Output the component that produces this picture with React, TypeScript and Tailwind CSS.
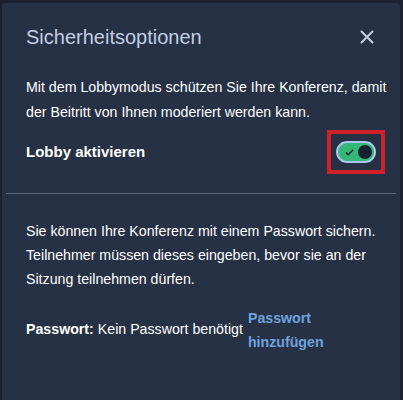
import { useState } from 'react';

const SecurityDialog = () => {
    const [lobby, setLobby] = useState(true);

    return (
        <div className="w-[403px] h-[400px] bg-[#1b2130] pt-[3px] pl-[2px] pr-[3px] font-['Liberation_Sans',Arial,sans-serif]">
            <div className="h-full bg-[#263146] rounded-t-[3px]">
                {/* Header */}
                <div className="flex items-center justify-between pl-[24px] pr-[26px] pt-[14px] h-[54px]">
                    <h1 className="text-[20px] text-[#c3cde2] leading-none">Sicherheitsoptionen</h1>
                    <button aria-label="Schließen" className="text-[#c3cde2]">
                        <svg width="14" height="14" viewBox="0 0 14 14" fill="none" stroke="currentColor" strokeWidth="2" strokeLinecap="round">
                            <path d="M1.5 1.5l11 11M12.5 1.5l-11 11" />
                        </svg>
                    </button>
                </div>

                {/* Lobby */}
                <div className="px-[24px]">
                    <p className="text-[14.2px] leading-[25px] text-white pt-[18px] whitespace-nowrap">
                        Mit dem Lobbymodus schützen Sie Ihre Konferenz, damit
                        <br />
                        der Beitritt von Ihnen moderiert werden kann.
                    </p>
                    <div className="flex items-center justify-between h-[44px] mt-[5px]">
                        <span className="text-[15px] font-bold text-white">Lobby aktivieren</span>
                        <div className="relative">
                            <div className="absolute -inset-x-[9px] -inset-y-[11px] border-4 border-[#d0202a]" />
                            <button
                                onClick={() => setLobby(!lobby)}
                                aria-pressed={lobby}
                                className={`relative flex items-center w-[40px] h-[22px] rounded-full border-2 border-[#a9c6ee] ${lobby ? 'bg-[#35b877] justify-end' : 'bg-[#4a5568] justify-start'} px-[2px]`}
                            >
                                {lobby && (
                                    <svg className="absolute left-[7px] top-[6px]" width="9" height="7" viewBox="0 0 9 7" fill="none" stroke="#1b2433" strokeWidth="1.4">
                                        <path d="M0.8 3.5l2.3 2.3L8.2 0.8" />
                                    </svg>
                                )}
                                <span className="w-[14px] h-[14px] rounded-full bg-[#17202e]" />
                            </button>
                        </div>
                    </div>
                </div>

                <div className="mx-[4px] mt-[19px] h-px bg-[#5d6880]" />

                {/* Passwort */}
                <div className="px-[24px] pt-[25px]">
                    <p className="text-[14.2px] leading-[24px] text-white">
                        Sie können Ihre Konferenz mit einem Passwort sichern. Teilnehmer müssen dieses eingeben, bevor sie an der Sitzung teilnehmen dürfen.
                    </p>
                    <div className="flex items-center mt-[15px] text-[14.2px] text-white">
                        <span className="font-bold mr-[4px]">Passwort:</span>
                        <span>Kein Passwort benötigt</span>
                        <a href="#" className="ml-[5px] font-bold text-[#6ea3dd] leading-[24px] w-[90px]">
                            Passwort hinzufügen
                        </a>
                    </div>
                </div>
            </div>
        </div>
    );
};

export default function App() {
    return <SecurityDialog />;
}
